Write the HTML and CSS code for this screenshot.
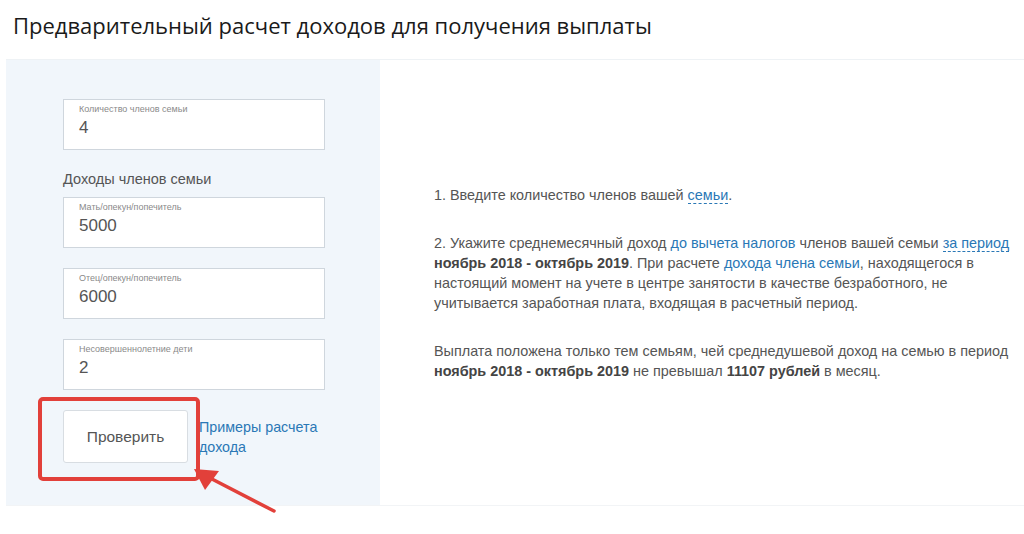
FILE: index.html
```html
<!DOCTYPE html>
<html lang="ru">
<head>
<meta charset="utf-8">
<link rel="stylesheet" href="styles.css">
</head>
<body>
<div class="page">
  <h1 class="title">Предварительный расчет доходов для получения выплаты</h1>
  <div class="panel">
    <div class="form">
      <div class="field">
        <div class="field-label">Количество членов семьи</div>
        <div class="field-value">4</div>
      </div>
      <div class="group-title">Доходы членов семьи</div>
      <div class="field">
        <div class="field-label">Мать/опекун/попечитель</div>
        <div class="field-value">5000</div>
      </div>
      <div class="field">
        <div class="field-label">Отец/опекун/попечитель</div>
        <div class="field-value">6000</div>
      </div>
      <div class="field">
        <div class="field-label">Несовершеннолетние дети</div>
        <div class="field-value">2</div>
      </div>
      <div class="actions">
        <button class="btn">Проверить</button>
        <a class="examples">Примеры расчета дохода</a>
        <div class="highlight"></div>
      </div>
    </div>
    <div class="info">
      <p>1. Введите количество членов вашей <a class="dashed">семьи</a>.</p>
      <p>2. Укажите среднемесячный доход <a class="link">до вычета налогов</a> членов вашей семьи <a class="dashed">за период</a> <b>ноябрь 2018 - октябрь 2019</b>. При расчете <a class="link">дохода члена семьи</a>, находящегося в настоящий момент на учете в центре занятости в качестве безработного, не учитывается заработная плата, входящая в расчетный период.</p>
      <p>Выплата положена только тем семьям, чей среднедушевой доход на семью в период <b>ноябрь 2018 - октябрь 2019</b> не превышал <b>11107 рублей</b> в месяц.</p>
    </div>
  </div>
  <svg class="arrow" width="90" height="50" viewBox="0 0 90 50">
    <line x1="82" y1="44" x2="18" y2="11" stroke="#e2403a" stroke-width="3.5" stroke-linecap="round"/>
    <polygon points="2,2 27,4 13,23" fill="#e2403a"/>
  </svg>
</div>
</body>
</html>
```

FILE: styles.css
```css
html, body {
  margin: 0;
  padding: 0;
  background: #ffffff;
}
.page {
  position: relative;
  width: 1024px;
  height: 534px;
  overflow: hidden;
  font-family: "Liberation Sans", Arial, sans-serif;
}
.title {
  margin: 0;
  height: 59px;
  box-sizing: border-box;
  padding: 11px 0 0 13px;
  font-family: "Open Sans", "Noto Sans", sans-serif;
  font-weight: 400;
  font-size: 22px;
  line-height: 28px;
  color: #1a1a1a;
}
.panel {
  display: flex;
  margin-left: 6px;
  height: 445px;
  border-top: 1px solid #eef2f5;
  border-bottom: 1px solid #f2f4f6;
}
.form {
  position: relative;
  width: 374px;
  box-sizing: border-box;
  padding: 39px 0 0 57px;
  background: #f1f6fb;
}
.field {
  width: 262px;
  height: 51px;
  box-sizing: border-box;
  border: 1px solid #cfd6dd;
  background: #ffffff;
  padding: 4px 0 0 15px;
  margin-bottom: 20px;
}
.field-label {
  font-size: 9px;
  line-height: 11px;
  color: #8a8a8a;
}
.field-value {
  font-size: 17px;
  line-height: 22px;
  margin-top: 2px;
  color: #555555;
}
.group-title {
  font-size: 14.5px;
  line-height: 18px;
  color: #555555;
  margin: 2px 0 9px 0;
}
.actions {
  position: relative;
  display: flex;
  align-items: flex-start;
  margin-top: 2px;
}
.btn {
  width: 125px;
  height: 53px;
  box-sizing: border-box;
  border: 1px solid #d8dde2;
  border-radius: 3px;
  background: #ffffff;
  font-family: "Liberation Sans", Arial, sans-serif;
  font-size: 15.5px;
  color: #555555;
  padding: 0;
}
.examples {
  margin: 7px 0 0 11px;
  width: 130px;
  font-size: 14.3px;
  line-height: 20px;
  color: #2a78b6;
}
.highlight {
  position: absolute;
  left: -25px;
  top: -13px;
  width: 162px;
  height: 84px;
  box-sizing: border-box;
  border: 4px solid #e2403a;
  border-radius: 5px;
}
.info {
  flex: 1;
  background: #ffffff;
  padding: 125px 0 0 54px;
}
.info p {
  margin: 0 0 28px 0;
  width: 584px;
  font-size: 14.4px;
  line-height: 20px;
  color: #555555;
}
.info b {
  color: #444444;
}
.link {
  color: #2a78b6;
}
.dashed {
  color: #2a78b6;
  border-bottom: 1px dashed #2a78b6;
}
.arrow {
  position: absolute;
  left: 192px;
  top: 467px;
}
```
